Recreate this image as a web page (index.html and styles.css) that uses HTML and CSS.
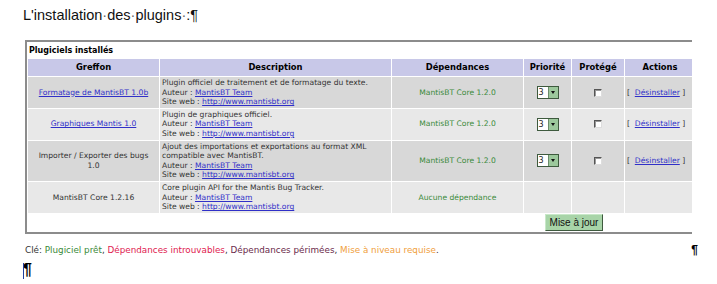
FILE: index.html
```html
<!DOCTYPE html>
<html lang="fr">
<head>
    <meta charset="UTF-8">
    <title>L'installation des plugins</title>
    <link rel="stylesheet" href="styles.css">
</head>
<body>
    <div class="doc">
        <p class="doc-title">L'installation<span class="mark">·</span>des<span class="mark">·</span>plugins<span class="mark">·</span>:¶</p>

        <div class="frame">
            <table class="plugins">
                <colgroup>
                    <col class="c-name">
                    <col class="c-desc">
                    <col class="c-deps">
                    <col class="c-prio">
                    <col class="c-prot">
                    <col class="c-act">
                </colgroup>
                <tr class="caption-row">
                    <td colspan="6">Plugiciels installés</td>
                </tr>
                <tr class="head-row">
                    <th>Greffon</th>
                    <th>Description</th>
                    <th>Dépendances</th>
                    <th>Priorité</th>
                    <th>Protégé</th>
                    <th>Actions</th>
                </tr>
                <tr class="row-a">
                    <td class="name"><a href="#">Formatage de MantisBT 1.0b</a></td>
                    <td class="desc">Plugin officiel de traitement et de formatage du texte.<br>Auteur : <a href="#">MantisBT Team</a><br>Site web : <a href="#">http://www.mantisbt.org</a></td>
                    <td class="deps">MantisBT Core 1.2.0</td>
                    <td class="center"><span class="prio"><span class="prio-val">3</span><span class="prio-btn"></span></span></td>
                    <td class="center"><span class="check"></span></td>
                    <td class="act">[&nbsp; <a href="#">Désinstaller</a> ]</td>
                </tr>
                <tr class="row-b">
                    <td class="name"><a href="#">Graphiques Mantis 1.0</a></td>
                    <td class="desc">Plugin de graphiques officiel.<br>Auteur : <a href="#">MantisBT Team</a><br>Site web : <a href="#">http://www.mantisbt.org</a></td>
                    <td class="deps">MantisBT Core 1.2.0</td>
                    <td class="center"><span class="prio"><span class="prio-val">3</span><span class="prio-btn"></span></span></td>
                    <td class="center"><span class="check"></span></td>
                    <td class="act">[&nbsp; <a href="#">Désinstaller</a> ]</td>
                </tr>
                <tr class="row-a">
                    <td class="name">Importer / Exporter des bugs 1.0</td>
                    <td class="desc">Ajout des importations et exportations au format XML compatible avec MantisBT.<br>Auteur : <a href="#">MantisBT Team</a><br>Site web : <a href="#">http://www.mantisbt.org</a></td>
                    <td class="deps">MantisBT Core 1.2.0</td>
                    <td class="center"><span class="prio"><span class="prio-val">3</span><span class="prio-btn"></span></span></td>
                    <td class="center"><span class="check"></span></td>
                    <td class="act">[&nbsp; <a href="#">Désinstaller</a> ]</td>
                </tr>
                <tr class="row-b">
                    <td class="name">MantisBT Core 1.2.16</td>
                    <td class="desc">Core plugin API for the Mantis Bug Tracker.<br>Auteur : <a href="#">MantisBT Team</a><br>Site web : <a href="#">http://www.mantisbt.org</a></td>
                    <td class="deps">Aucune dépendance</td>
                    <td></td>
                    <td></td>
                    <td></td>
                </tr>
                <tr class="foot-row">
                    <td colspan="3"></td>
                    <td colspan="2" class="center"><button type="button" class="update">Mise à jour</button></td>
                    <td></td>
                </tr>
            </table>
        </div>

        <div class="legend-line">
            <p class="legend">Clé: <span class="ok">Plugiciel prêt</span>, <span class="missing">Dépendances introuvables</span>, <span class="outdated">Dépendances périmées</span>, <span class="upgrade">Mise à niveau requise</span>.</p>
            <span class="pil">¶</span>
        </div>

        <p class="last-par"><span class="caret"></span>¶</p>
    </div>
</body>
</html>
```

FILE: styles.css
```css
body {
    margin: 0;
    background: white;
    color: black;
    font-family: "Liberation Sans", Arial, sans-serif;
}
.doc {
    width: 717px;
    height: 284px;
    overflow: hidden;
}
.doc-title {
    margin: 0 0 15px 23px;
    padding-top: 5px;
    font-size: 14.5px;
    line-height: 20px;
    color: #111;
}
.mark {
    color: #666;
}
.frame {
    margin-left: 25px;
    width: 667px;
    overflow: hidden;
}
.plugins {
    table-layout: fixed;
    width: 670px;
    border: 2px solid #8c8c8c;
    border-right: none;
    border-spacing: 1px;
    font-family: "DejaVu Sans", Verdana, sans-serif;
    font-size: 7.6px;
    line-height: 9.6px;
    color: #333;
}
.c-name { width: 131px; }
.c-desc { width: 231px; }
.c-deps { width: 131px; }
.c-prio { width: 47px; }
.c-prot { width: 52px; }
.c-act { width: 70px; }
.plugins td, .plugins th {
    padding: 1px 2px;
}
.caption-row td {
    font-weight: bold;
    font-size: 8px;
    color: black;
    height: 13px;
    padding-left: 1px;
}
.head-row th {
    background: #c8c8e8;
    color: black;
    height: 15px;
    font-size: 8.4px;
}
.row-a td {
    background: #d8d8d8;
}
.row-b td {
    background: #e8e8e8;
}
.plugins a {
    color: #3030c8;
}
.name {
    text-align: center;
}
.plugins .name {
    padding: 1px 6px;
}
.desc {
    padding-left: 3px;
}
.deps {
    text-align: center;
    color: #3a8a3a;
}
.center {
    text-align: center;
}
.act {
    white-space: nowrap;
    padding-left: 3px;
}
.prio {
    display: inline-flex;
    vertical-align: middle;
    border: 1px solid #3e5a3e;
    height: 11px;
}
.prio-val {
    width: 9px;
    background: white;
    color: #222;
    font-size: 8px;
    line-height: 11px;
    text-align: left;
    padding-left: 1px;
}
.prio-btn {
    width: 9px;
    background: #9cc89c;
    border-left: 1px solid #6a8a6a;
    display: flex;
    align-items: center;
    justify-content: center;
}
.prio-btn::after {
    content: "";
    border-left: 2px solid transparent;
    border-right: 2px solid transparent;
    border-top: 3px solid #111;
}
.check {
    display: inline-block;
    vertical-align: middle;
    width: 6px;
    height: 6px;
    background: white;
    border: 1px solid;
    border-color: #555 #ddd #ddd #555;
    box-shadow: inset 1px 1px 0 #999;
}
.foot-row td {
    height: 17px;
    padding: 0;
}
.update {
    font-family: "Liberation Sans", Arial, sans-serif;
    font-size: 10px;
    height: 17px;
    width: 58px;
    padding: 0;
    background: #a8d4a8;
    color: #111;
    border: 1px solid;
    border-color: #c8e8c8 #3e5a3e #3e5a3e #c8e8c8;
}
.legend-line {
    display: flex;
    align-items: center;
    justify-content: space-between;
    margin: 9px 0 0 25px;
    width: 673px;
}
.legend {
    margin: 0;
    font-family: "DejaVu Sans", Verdana, sans-serif;
    font-size: 8.8px;
    color: #333;
}
.ok { color: #3a8a3a; }
.missing { color: #e02050; }
.outdated { color: #6a2a4a; }
.upgrade { color: #f0a040; }
.pil {
    font-size: 12px;
    font-weight: bold;
}
.last-par {
    margin: 4px 0 0 23px;
    font-size: 16px;
    line-height: 18px;
    font-weight: bold;
    position: relative;
}
.caret {
    position: absolute;
    left: 0;
    top: 2px;
    width: 1px;
    height: 16px;
    background: #2040a0;
}
```
